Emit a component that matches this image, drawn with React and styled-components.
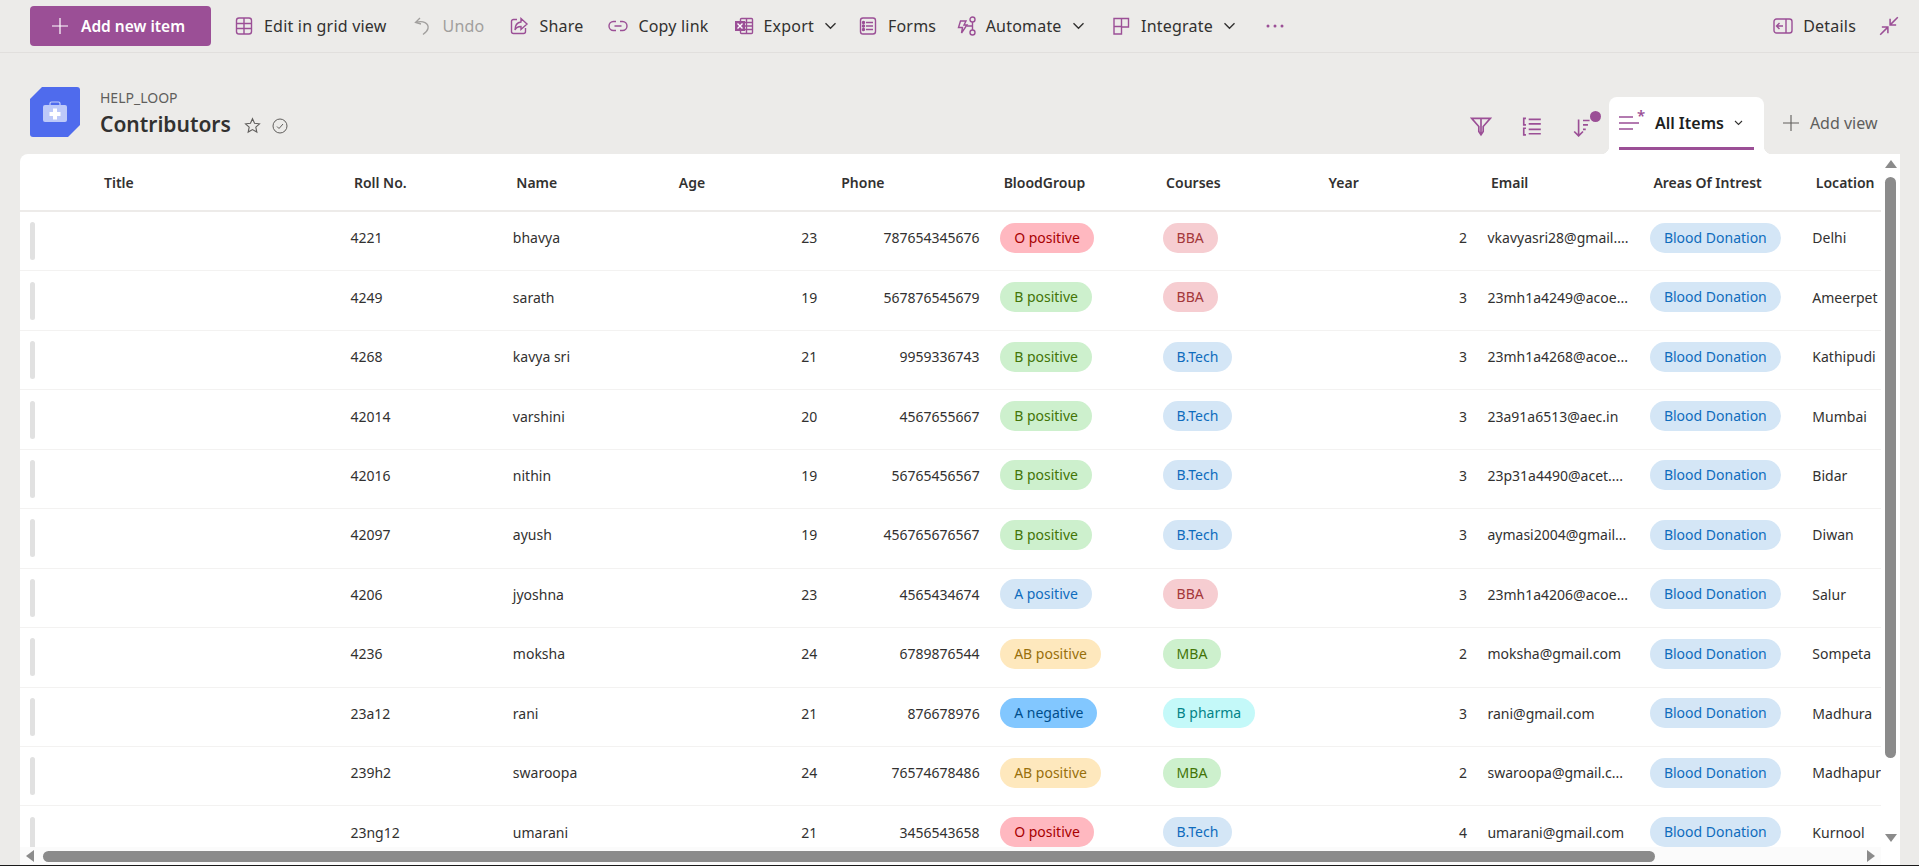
import React from 'react';
import styled, { createGlobalStyle } from 'styled-components';

const PURPLE = '#9b4f96';
const FONT = '"Noto Sans", "Open Sans", Arial, sans-serif';

const GlobalStyle = createGlobalStyle`
  html, body { margin: 0; padding: 0; height: 100%; background: #ecebe9; overflow: hidden; }
  #root { height: 100%; }
`;

const Page = styled.div`
  height: 866px;
  display: flex;
  flex-direction: column;
  font-family: ${FONT};
  color: #323130;
  border-bottom: 1px solid #1a1a1a;
  box-sizing: border-box;
`;

const Toolbar = styled.div`
  height: 53px;
  flex: none;
  box-sizing: border-box;
  display: flex;
  align-items: center;
  padding: 0 19px 0 30px;
  border-bottom: 1px solid #e1dfdd;
`;

const AddButton = styled.button`
  width: 181px;
  height: 40px;
  margin-right: 23px;
  padding: 0 5px 0 0;
  border: 0;
  border-radius: 4px;
  background: ${PURPLE};
  color: #fff;
  font: 600 15.5px ${FONT};
  display: flex;
  align-items: center;
  justify-content: center;
  gap: 12px;
`;

const ToolItem = styled.div`
  display: flex;
  align-items: center;
  gap: ${p => p.$gap || 10}px;
  margin-right: ${p => p.$after || 25}px;
  font-size: 16px;
  letter-spacing: 0.2px;
  white-space: nowrap;
  color: ${p => (p.$disabled ? '#a19f9d' : '#323130')};
`;

const Spacer = styled.div`
  flex: 1;
`;

const Chevron = () => (
  <svg width="13" height="8" viewBox="0 0 13 8" fill="none" stroke="#323130" strokeWidth="1.4">
    <path d="M1.5 1.2 6.5 6.2 11.5 1.2" />
  </svg>
);

const Ic = ({ size = 20, w, h, children, vb, sw = 1.4 }) => (
  <svg width={w || size} height={h || size} viewBox={vb || '0 0 20 20'} fill="none" stroke={PURPLE} strokeWidth={sw} style={{ flex: 'none' }}>
    {children}
  </svg>
);

const Header = styled.div`
  height: 101px;
  flex: none;
  box-sizing: border-box;
  display: flex;
  padding: 0 41.5px 0 30px;
`;

const Logo = styled.div`
  width: 50px;
  height: 50px;
  margin-top: 34px;
  background: #4f6bed;
  border-radius: 3px;
  clip-path: polygon(12px 0, 100% 0, 100% 38px, 38px 100%, 0 100%, 0 12px);
  display: flex;
  align-items: center;
  justify-content: center;
`;

const TitleBlock = styled.div`
  margin: 36px 0 0 20px;
`;

const SiteName = styled.div`
  font-size: 14px;
  line-height: 18px;
  color: #605e5c;
`;

const ListTitle = styled.div`
  display: flex;
  align-items: center;
  font-size: 21px;
  font-weight: 600;
  line-height: 30px;
  margin-top: 2px;
  color: #323130;
`;

const TitleIcons = styled.div`
  display: flex;
  align-items: center;
  gap: 11px;
  margin: 3px 0 0 13px;
`;

const ViewBar = styled.div`
  margin-left: auto;
  align-self: flex-end;
  display: flex;
  align-items: flex-end;
  height: 57px;
`;

const ViewIcon = styled.div`
  width: 22px;
  height: 22px;
  margin: 0 0 17px 29px;
  position: relative;
`;

const TabIcon = styled.div`
  width: 20px;
  height: 20px;
  position: relative;
`;

const Tab = styled.div`
  width: 155px;
  height: 57px;
  margin-left: 15px;
  box-sizing: border-box;
  background: #fff;
  border-radius: 8px 8px 0 0;
  padding: 0 10px;
  display: flex;
  flex-direction: column;
  position: relative;

  &::before, &::after {
    content: '';
    position: absolute;
    bottom: 0;
    width: 8px;
    height: 8px;
  }
  &::before {
    left: -8px;
    background: radial-gradient(circle at 0 0, transparent 8px, #fff 8.5px);
  }
  &::after {
    right: -8px;
    background: radial-gradient(circle at 100% 0, transparent 8px, #fff 8.5px);
  }
`;

const TabLabel = styled.div`
  height: 50px;
  display: flex;
  align-items: center;
  gap: 10px;
  padding-top: 2px;
  box-sizing: border-box;
  font-size: 16px;
  font-weight: 600;
  color: #201f1e;
`;

const TabText = styled.span`
  margin-left: 6px;
`;

const TabLine = styled.div`
  height: 3px;
  background: ${PURPLE};
`;

const AddView = styled.div`
  display: flex;
  align-items: center;
  gap: 11px;
  margin: 0 0 20px 19px;
  font-size: 16px;
  color: #605e5c;
`;

const Card = styled.div`
  flex: 1;
  min-height: 0;
  margin: 0 19px 0 20px;
  background: #fff;
  border-radius: 8px 0 0 0;
  overflow: hidden;
  display: grid;
  grid-template-columns: 1fr 19px;
  grid-template-rows: 1fr 18px;
`;

const TableArea = styled.div`
  overflow: hidden;
  min-width: 0;
  min-height: 0;
`;

const Row = styled.div`
  display: grid;
  grid-template-columns: 321.9px repeat(10, 162.45px);
  height: ${p => (p.$head ? '58px' : '59.45px')};
  box-sizing: border-box;
  align-items: center;
  border-bottom: ${p => (p.$head ? '2px solid #edebe9' : '1px solid #f3f2f1')};
  width: 1950px;
`;

const HeadCell = styled.div`
  padding-left: ${p => p.$pad || 12}px;
  font-size: 14px;
  font-weight: 600;
  color: #323130;
`;

const Cell = styled.div`
  padding: 0 12px 0 8.5px;
  margin-bottom: 7px;
  font-size: 14px;
  color: #323130;
  white-space: nowrap;
  text-align: ${p => (p.$num ? 'right' : 'left')};
`;

const GripCell = styled.div`
  padding-left: 10px;
  display: flex;
  align-items: center;
`;

const Grip = styled.div`
  width: 5px;
  height: 38px;
  border-radius: 3px;
  background: #e1e1e1;
`;

const PILLS = {
  red: ['#ffb8c0', '#a80000'],
  rose: ['#f6cdd1', '#a4373a'],
  green: ['#cdf0cd', '#437406'],
  blue: ['#d4e6f6', '#0f6cbd'],
  amber: ['#fee8bd', '#986f0b'],
  sky: ['#82c7ff', '#004e8c'],
  cyan: ['#c4f9f9', '#038387'],
};

const Pill = styled.span`
  display: inline-block;
  height: 30px;
  line-height: 29px;
  padding: 0 14px;
  border-radius: 15px;
  font-size: 14px;
  background: ${p => PILLS[p.$tone][0]};
  color: ${p => PILLS[p.$tone][1]};
`;

const VTrack = styled.div`
  background: #fff;
  display: flex;
  flex-direction: column;
  align-items: center;
  padding: 6px 0 0;
`;

const VThumb = styled.div`
  width: 11px;
  height: 581px;
  margin-top: 9px;
  border-radius: 6px;
  background: #8b8b8b;
`;

const ArrowUp = styled.div`
  width: 0;
  height: 0;
  border-left: 6px solid transparent;
  border-right: 6px solid transparent;
  border-bottom: 8px solid #8b8b8b;
`;

const ArrowDown = styled(ArrowUp)`
  border-bottom: 0;
  border-top: 8px solid #8b8b8b;
  margin-top: auto;
  margin-bottom: 5px;
`;

const HTrack = styled.div`
  background: #fbfbfb;
  display: flex;
  align-items: center;
  padding: 0 0 0 6px;
  grid-column: 1;
`;

const HThumb = styled.div`
  width: 1612px;
  height: 11px;
  margin-left: 9px;
  border-radius: 6px;
  background: #8b8b8b;
`;

const ArrowLeft = styled.div`
  width: 0;
  height: 0;
  border-top: 6px solid transparent;
  border-bottom: 6px solid transparent;
  border-right: 8px solid #8b8b8b;
`;

const ArrowRight = styled.div`
  width: 0;
  height: 0;
  margin: 0 6px 0 auto;
  border-top: 6px solid transparent;
  border-bottom: 6px solid transparent;
  border-left: 8px solid #8b8b8b;
`;

const Corner = styled.div`
  background: #fff;
`;

const COLUMNS = ['Roll No.', 'Name', 'Age', 'Phone', 'BloodGroup', 'Courses', 'Year', 'Email', 'Areas Of Intrest', 'Location'];

const BLOOD = {
  'O positive': 'red',
  'B positive': 'green',
  'A positive': 'blue',
  'AB positive': 'amber',
  'A negative': 'sky',
};

const COURSE = {
  BBA: 'rose',
  'B.Tech': 'blue',
  MBA: 'green',
  'B pharma': 'cyan',
};

const ROWS = [
  ['4221', 'bhavya', 23, '787654345676', 'O positive', 'BBA', 2, 'vkavyasri28@gmail....', 'Delhi'],
  ['4249', 'sarath', 19, '567876545679', 'B positive', 'BBA', 3, '23mh1a4249@acoe...', 'Ameerpet'],
  ['4268', 'kavya sri', 21, '9959336743', 'B positive', 'B.Tech', 3, '23mh1a4268@acoe...', 'Kathipudi'],
  ['42014', 'varshini', 20, '4567655667', 'B positive', 'B.Tech', 3, '23a91a6513@aec.in', 'Mumbai'],
  ['42016', 'nithin', 19, '56765456567', 'B positive', 'B.Tech', 3, '23p31a4490@acet....', 'Bidar'],
  ['42097', 'ayush', 19, '456765676567', 'B positive', 'B.Tech', 3, 'aymasi2004@gmail...', 'Diwan'],
  ['4206', 'jyoshna', 23, '4565434674', 'A positive', 'BBA', 3, '23mh1a4206@acoe...', 'Salur'],
  ['4236', 'moksha', 24, '6789876544', 'AB positive', 'MBA', 2, 'moksha@gmail.com', 'Sompeta'],
  ['23a12', 'rani', 21, '876678976', 'A negative', 'B pharma', 3, 'rani@gmail.com', 'Madhura'],
  ['239h2', 'swaroopa', 24, '76574678486', 'AB positive', 'MBA', 2, 'swaroopa@gmail.c...', 'Madhapur'],
  ['23ng12', 'umarani', 21, '3456543658', 'O positive', 'B.Tech', 4, 'umarani@gmail.com', 'Kurnool'],
];

const Dot = styled.span`
  position: absolute;
  top: -4px;
  right: -7px;
  width: 11px;
  height: 11px;
  border-radius: 50%;
  background: ${PURPLE};
`;

const Star = styled.span`
  position: absolute;
  top: -7px;
  left: 18px;
  font-size: 15px;
  line-height: 18px;
  color: ${PURPLE};
`;

export default function App() {
  return (
    <Page>
      <GlobalStyle />
      <Toolbar>
        <AddButton>
          <svg width="18" height="18" viewBox="0 0 18 18" stroke="#fff" strokeWidth="1.2"><path d="M9 1v16M1 9h16" /></svg>
          Add new item
        </AddButton>
        <ToolItem $after={26}>
          <Ic><rect x="2.5" y="2" width="15" height="16" rx="2.5" /><path d="M2.5 7.500h15M2.500 12.500h15M10 2v16" /></Ic>
          Edit in grid view
        </ToolItem>
        <ToolItem $disabled>
          <svg width="20" height="20" viewBox="0 0 20 20" fill="none" stroke="#a19f9d" strokeWidth="1.3"><path d="M7 2 2.500 6.500 8 8M3 6.500c7-2.500 13 1 12 6-.6 2.800-3 4.500-5 6" /></svg>
          Undo
        </ToolItem>
        <ToolItem>
          <Ic><path d="M8 3.500H4.500a2 2 0 0 0-2 2v10a2 2 0 0 0 2 2h10a2 2 0 0 0 2-2V12" /><path d="M12 2.500 18 8l-6 5.500V10.500c-3 0-5 1-6 3.500 0-4.500 2-7.500 6-8z" /></Ic>
          Share
        </ToolItem>
        <ToolItem>
          <Ic><path d="M8 5.500H5.500a4.500 4.500 0 0 0 0 9H8M12 5.500h2.500a4.500 4.500 0 0 1 0 9H12M6.500 10h7" /></Ic>
          Copy link
        </ToolItem>
        <ToolItem $after={21}>
          <Ic><rect x="6.500" y="2.500" width="12" height="15" rx="1" /><path d="M6.500 6.500h12M6.500 10h12M6.500 13.500h12M12.500 2.500v15" /><rect x="1" y="5" width="10" height="10" fill={PURPLE} stroke="none" /><path d="M3.500 7.500l5 5M8.500 7.500l-5 5" stroke="#fff" strokeWidth="1.400" /></Ic>
          Export
          <Chevron />
        </ToolItem>
        <ToolItem $after={19.5}>
          <Ic><rect x="2.500" y="2" width="15" height="16" rx="2.500" /><path d="M8 6.500h7M8 10h7M8 13.500h7" /><circle cx="5.500" cy="6.500" r="1" fill={PURPLE} /><circle cx="5.500" cy="10" r="1" fill={PURPLE} /><circle cx="5.500" cy="13.500" r="1" fill={PURPLE} /></Ic>
          Forms
        </ToolItem>
        <ToolItem $after={26.5}>
          <Ic><path d="M4.500 5H10L8 9h3l-5.500 8 1-5.500H2.500z" /><circle cx="16.500" cy="3.500" r="2.500" /><circle cx="16.500" cy="16.500" r="2.500" /><path d="M16.500 6v8M11 10h5.500" /></Ic>
          Automate
          <Chevron />
        </ToolItem>
        <ToolItem $after={30}>
          <Ic><path d="M3 2.500h14.500v8.500H10.500v7H3zM3 10.500h7.500M10.500 2.500v8" /></Ic>
          Integrate
          <Chevron />
        </ToolItem>
        <svg width="18" height="4" viewBox="0 0 18 4" fill={PURPLE}><circle cx="2" cy="2" r="1.500" /><circle cx="9" cy="2" r="1.500" /><circle cx="16" cy="2" r="1.500" /></svg>
        <Spacer />
        <ToolItem $after={22}>
          <Ic w={20} h={16} vb="0 0 20 16"><rect x="1" y="1" width="18" height="14" rx="2.500" /><path d="M13 1v14M10 8H3.500M6.500 5 3.500 8l3 3" /></Ic>
          Details
        </ToolItem>
        <Ic size={22}><path d="M2 18 8.500 11.500M3.500 11h5.500v5.500M18 2l-6.500 6.500M11 3.500V9h5.500" /></Ic>
      </Toolbar>
      <Header>
        <Logo>
          <svg width="26" height="22" viewBox="0 0 26 22">
            <path d="M8 5V2.500A1.500 1.500 0 0 1 9.500 1h7A1.500 1.500 0 0 1 18 2.500V5" fill="none" stroke="#c5d0fa" strokeWidth="1.200" />
            <rect x="1" y="4" width="24" height="17" rx="2" fill="#bdc9f9" />
            <path d="M11 7.500h4V11h3.500v4H15v3.500h-4V15H7.500v-4H11z" fill="#fff" />
          </svg>
        </Logo>
        <TitleBlock>
          <SiteName>HELP_LOOP</SiteName>
          <ListTitle>
            Contributors
            <TitleIcons>
              <svg width="17" height="17" viewBox="0 0 20 20" fill="none" stroke="#605e5c" strokeWidth="1.300"><path d="m10 2 2.400 5.400 5.800.6-4.300 3.900 1.200 5.800L10 14.800l-5.100 2.900 1.200-5.800L1.800 8l5.800-.6z" /></svg>
              <svg width="16" height="16" viewBox="0 0 16 16" fill="none" stroke="#605e5c" strokeWidth="1"><circle cx="8" cy="8" r="7" /><path d="m5 8.500 2 2 4-4.500" /></svg>
            </TitleIcons>
          </ListTitle>
        </TitleBlock>
        <ViewBar>
          <ViewIcon>
            <Ic size={22} sw={1.5}><path d="M1.500 3h17L12 10.500V15l-2 3-2-3v-4.500zM10 3v15" /></Ic>
          </ViewIcon>
          <ViewIcon>
            <Ic size={22} sw={1.5}><path d="M7 4h11M7 8h11M7 13h11M7 17h11M4.500 3H2.500v6h2M4.500 12H2.500v6h2" /></Ic>
          </ViewIcon>
          <ViewIcon>
            <Ic size={22} sw={1.5}><path d="M6 4v15M2 15l4 4 4-4M10 5h6M10 9h4.500M10 13h2.500" /></Ic>
            <Dot />
          </ViewIcon>
          <Tab>
            <TabLabel>
              <TabIcon>
                <Ic sw={1.5}><path d="M0 4h14M0 10h20M0 16h14" /></Ic>
                <Star>*</Star>
              </TabIcon>
              <TabText>All Items</TabText>
              <svg width="9" height="6" viewBox="0 0 9 6" fill="none" stroke="#323130" strokeWidth="1.100"><path d="m1 1 3.500 3.500L8 1" /></svg>
            </TabLabel>
            <TabLine />
          </Tab>
          <AddView>
            <svg width="16" height="16" viewBox="0 0 16 16" stroke="#605e5c" strokeWidth="1.100"><path d="M8 0v16M0 8h16" /></svg>
            Add view
          </AddView>
        </ViewBar>
      </Header>
      <Card>
        <TableArea>
          <Row $head>
            <HeadCell $pad={84}>Title</HeadCell>
            {COLUMNS.map(c => <HeadCell key={c}>{c}</HeadCell>)}
          </Row>
          {ROWS.map(r => (
            <Row key={r[0]}>
              <GripCell><Grip /></GripCell>
              <Cell>{r[0]}</Cell>
              <Cell>{r[1]}</Cell>
              <Cell $num>{r[2]}</Cell>
              <Cell $num>{r[3]}</Cell>
              <Cell><Pill $tone={BLOOD[r[4]]}>{r[4]}</Pill></Cell>
              <Cell><Pill $tone={COURSE[r[5]]}>{r[5]}</Pill></Cell>
              <Cell $num>{r[6]}</Cell>
              <Cell>{r[7]}</Cell>
              <Cell><Pill $tone="blue">Blood Donation</Pill></Cell>
              <Cell>{r[8]}</Cell>
            </Row>
          ))}
        </TableArea>
        <VTrack>
          <ArrowUp />
          <VThumb />
          <ArrowDown />
        </VTrack>
        <HTrack>
          <ArrowLeft />
          <HThumb />
          <ArrowRight />
        </HTrack>
        <Corner />
      </Card>
    </Page>
  );
}
